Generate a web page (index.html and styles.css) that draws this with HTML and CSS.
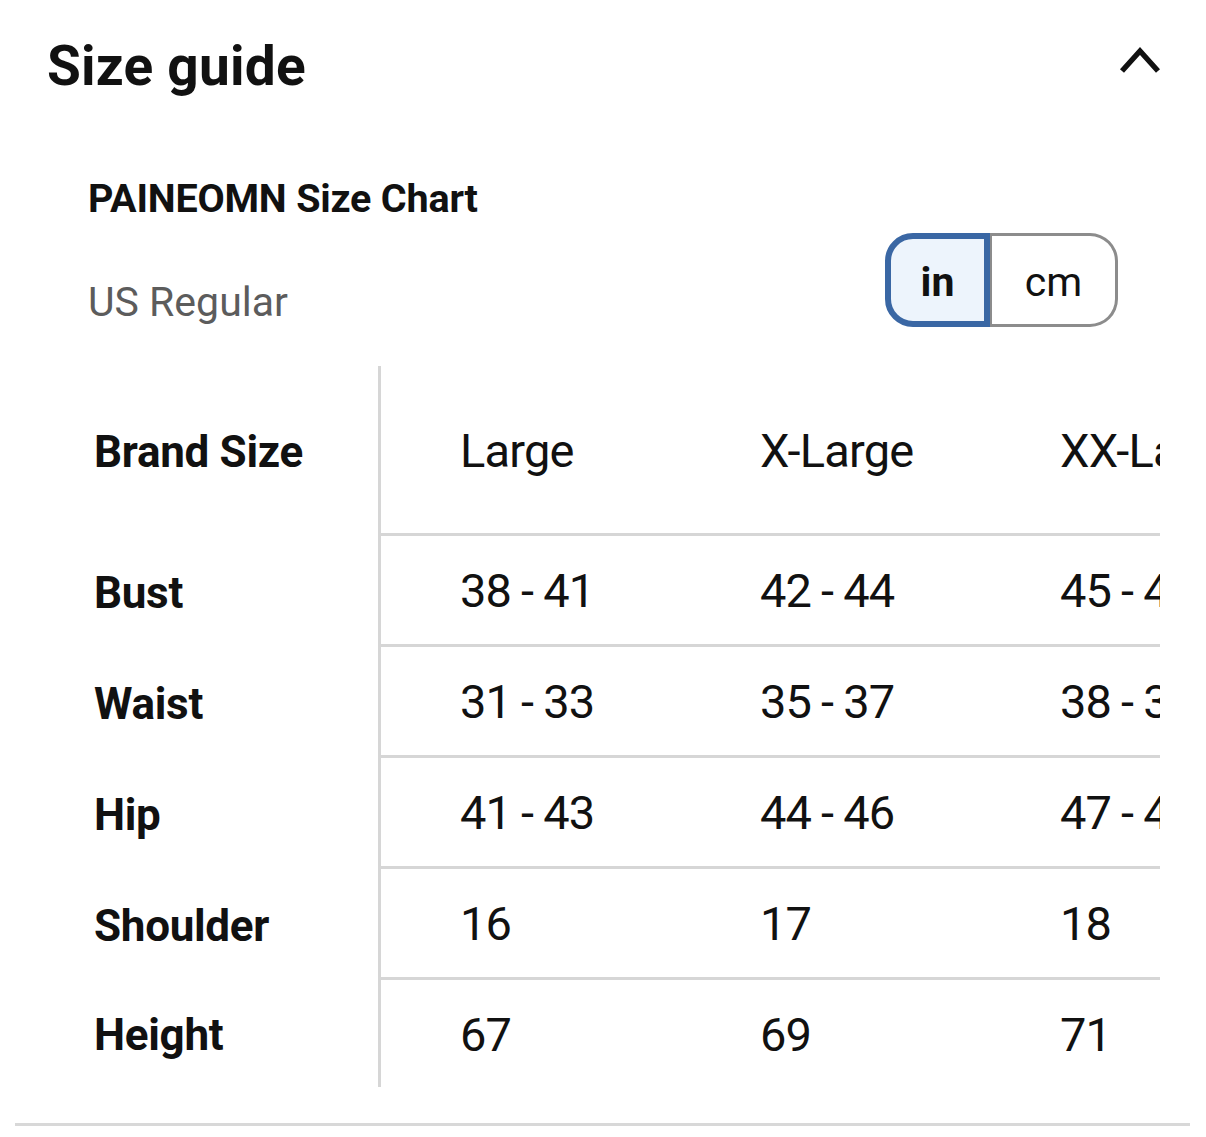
FILE: index.html
```html
<!DOCTYPE html>
<html lang="en">
<head>
<meta charset="utf-8">
<title>Size guide</title>
<link rel="stylesheet" href="styles.css">
</head>
<body>
<div class="page">
  <header class="guide-head">
    <h1 class="guide-title">Size guide</h1>
    <svg class="chevron" width="42" height="28" viewBox="0 0 42 28" aria-hidden="true">
      <polyline points="3,25 21,5 39,25" fill="none" stroke="#111" stroke-width="5.4" stroke-linecap="butt" stroke-linejoin="miter"/>
    </svg>
  </header>

  <section class="chart-info">
    <h2 class="chart-title">PAINEOMN Size Chart</h2>
    <div class="chart-sub">
      <span class="region">US Regular</span>
      <div class="unit-toggle">
        <span class="unit unit-active">in</span>
        <span class="unit unit-cm">cm</span>
      </div>
    </div>
  </section>

  <div class="size-table">
    <div class="row row-head">
      <div class="label">Brand Size</div>
      <div class="vals">
        <div class="val">Large</div>
        <div class="val">X-Large</div>
        <div class="val">XX-Large</div>
      </div>
    </div>
    <div class="row">
      <div class="label">Bust</div>
      <div class="vals">
        <div class="val">38 - 41</div>
        <div class="val">42 - 44</div>
        <div class="val">45 - 47</div>
      </div>
    </div>
    <div class="row">
      <div class="label">Waist</div>
      <div class="vals">
        <div class="val">31 - 33</div>
        <div class="val">35 - 37</div>
        <div class="val">38 - 39</div>
      </div>
    </div>
    <div class="row">
      <div class="label">Hip</div>
      <div class="vals">
        <div class="val">41 - 43</div>
        <div class="val">44 - 46</div>
        <div class="val">47 - 49</div>
      </div>
    </div>
    <div class="row">
      <div class="label">Shoulder</div>
      <div class="vals">
        <div class="val">16</div>
        <div class="val">17</div>
        <div class="val">18</div>
      </div>
    </div>
    <div class="row row-last">
      <div class="label">Height</div>
      <div class="vals">
        <div class="val">67</div>
        <div class="val">69</div>
        <div class="val">71</div>
      </div>
    </div>
  </div>

  <hr class="bottom-rule">
</div>
</body>
</html>
```

FILE: styles.css
```css
* {
  box-sizing: border-box;
}

html, body {
  margin: 0;
  padding: 0;
  background: #ffffff;
}

body {
  font-family: Roboto, "Liberation Sans", Arial, sans-serif;
  color: #111111;
}

.page {
  width: 1206px;
  min-height: 1137px;
  background: #ffffff;
  overflow: hidden;
}

/* Header */
.guide-head {
  display: flex;
  justify-content: space-between;
  align-items: flex-start;
  padding: 34px 45px 0 47px;
}

.guide-title {
  margin: 0;
  font-size: 55px;
  line-height: 64px;
  font-weight: 700;
  letter-spacing: 0.2px;
}

.chevron {
  display: block;
  margin-top: 12px;
}

/* Chart info */
.chart-info {
  padding: 77px 88px 0 88px;
}

.chart-title {
  margin: 0;
  font-size: 39.5px;
  line-height: 48px;
  font-weight: 700;
  letter-spacing: -0.2px;
}

.chart-sub {
  display: flex;
  justify-content: space-between;
  align-items: flex-end;
  margin-top: 10px;
}

.region {
  font-size: 41px;
  line-height: 49px;
  color: #5c5c5c;
  font-weight: 400;
}

.unit-toggle {
  display: flex;
  height: 94px;
}

.unit {
  display: flex;
  align-items: center;
  justify-content: center;
  font-size: 41px;
  line-height: 49px;
  padding-top: 4px;
}

.unit-active {
  width: 105px;
  border: 6px solid #3a67a4;
  border-radius: 28px 0 0 28px;
  background: #edf4fc;
  font-weight: 700;
}

.unit-cm {
  width: 128px;
  border: 3px solid #8c8c8c;
  border-left-width: 2px;
  border-radius: 0 28px 28px 0;
  background: #ffffff;
  font-weight: 400;
}

/* Table */
.size-table {
  margin: 39px 46px 0 94px;
}

.row {
  display: flex;
}

.label {
  flex: 0 0 287px;
  border-right: 3px solid #d6d6d6;
  display: flex;
  align-items: center;
  padding-top: 2px;
  font-size: 44px;
  font-weight: 700;
  line-height: 52px;
  letter-spacing: -0.3px;
}

.vals {
  flex: 1;
  min-width: 0;
  display: flex;
  overflow: hidden;
  height: 111px;
  border-bottom: 3px solid #d6d6d6;
}

.row-head .vals {
  height: 170px;
}

.row-last .vals {
  height: 107px;
  border-bottom: none;
}

.val {
  flex: 0 0 300px;
  padding-left: 79px;
  padding-top: 2px;
  display: flex;
  align-items: center;
  white-space: nowrap;
  font-size: 47px;
  line-height: 56px;
  font-weight: 400;
  letter-spacing: -0.8px;
  word-spacing: -1px;
}

.bottom-rule {
  margin: 36px 16px 0 15px;
  border: none;
  height: 3px;
  background: #d8d8d8;
}
```
